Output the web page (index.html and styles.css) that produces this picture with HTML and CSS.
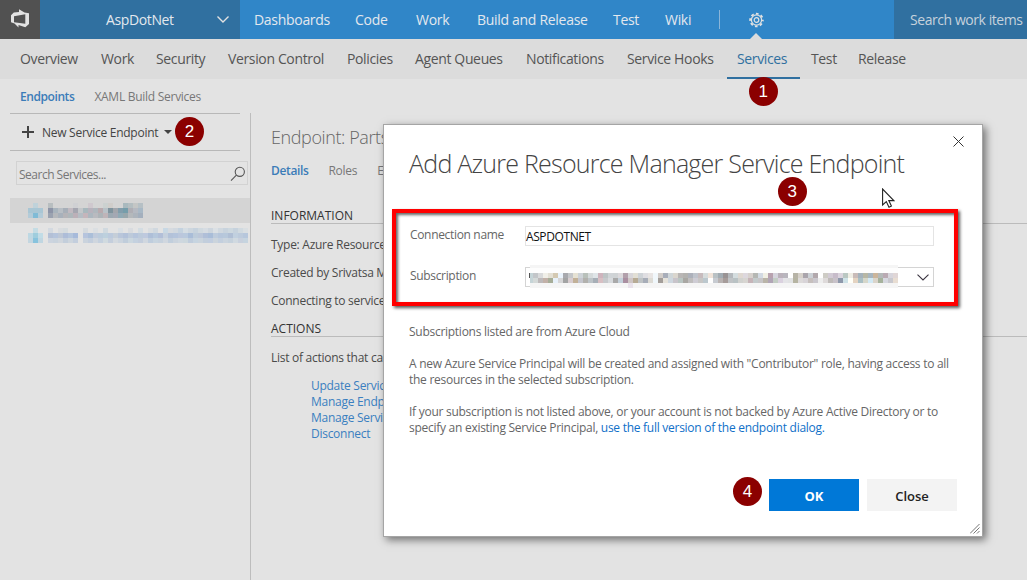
FILE: index.html
```html
<!DOCTYPE html>
<html lang="en">
<head>
<meta charset="utf-8">
<title>Services - AspDotNet</title>
<link rel="stylesheet" href="styles.css">
</head>
<body>
<div class="app">
  <header class="topbar">
    <div class="logo">
      <svg width="40" height="39" viewBox="0 0 40 39"><path fill="#e2e2e2" fill-rule="evenodd" d="M19 12V9.3L24.5 12.6L29 13.2V24L25.3 27.2L18.5 25V27.5L14.5 23.6L11 22.3V15.3L13.8 12.6ZM25.3 14.2L14 16.2V22.2L25.3 23.8Z"/></svg>
    </div>
    <div class="project">
      <span class="project-name">AspDotNet</span>
      <svg class="project-chevron" width="14" height="9" viewBox="0 0 14 9"><path d="M1.5 1.5L7 7L12.5 1.5" fill="none" stroke="#e2e2e2" stroke-width="1.4"/></svg>
    </div>
    <nav class="hubs">
      <a>Dashboards</a><a>Code</a><a>Work</a><a>Build and Release</a><a>Test</a><a>Wiki</a>
    </nav>
    <div class="settings">
      <svg width="16" height="16" viewBox="0 0 16 16" fill="none" stroke="#e2e2e2"><circle cx="7.5" cy="8" r="5.1" stroke-width="1.2"/><circle cx="7.5" cy="8" r="2.3" stroke-width="1.2"/><circle cx="7.5" cy="8" r="6.4" stroke-width="1.7" stroke-dasharray="2.7 2.327" stroke-dashoffset="1.35"/></svg>
      <i class="notch"></i>
    </div>
    <div class="search-top">Search work items</div>
  </header>
  <nav class="subnav">
    <a>Overview</a><a>Work</a><a>Security</a><a>Version Control</a><a>Policies</a><a>Agent Queues</a><a>Notifications</a><a>Service Hooks</a><a class="active">Services</a><a>Test</a><a>Release</a>
  </nav>
  <nav class="views"><a class="current">Endpoints</a><a>XAML Build Services</a></nav>
  <main class="content">
    <aside class="side">
      <div class="toolbar">
        <svg width="12" height="12" viewBox="0 0 12 12"><path d="M6 0V12M0 6H12" stroke="#444" stroke-width="2"/></svg>
        <span>New Service Endpoint</span>
        <i class="caret"></i>
      </div>
      <div class="filter">
        <span>Search Services...</span>
        <svg width="16" height="16" viewBox="0 0 16 16" fill="none" stroke="#555" stroke-width="1.1"><circle cx="9.8" cy="5.8" r="4.6"/><path d="M6.4 9.2L1 14.6"/></svg>
      </div>
      <div class="endpoint selected"><svg class="mosaic" data-name="first" width="240" height="25"></svg></div>
      <div class="endpoint"><svg class="mosaic" data-name="second" width="240" height="25"></svg></div>
    </aside>
    <section class="detail">
      <h1>Endpoint: Parts</h1>
      <div class="tabs"><a class="current">Details</a><a>Roles</a><a>E</a></div>
      <h2>INFORMATION</h2>
      <p>Type: Azure Resource</p>
      <p>Created by Srivatsa M</p>
      <p>Connecting to service</p>
      <h2 class="actions-head">ACTIONS</h2>
      <p class="actions-intro">List of actions that ca</p>
      <ul><li>Update Servic</li><li>Manage Endp</li><li>Manage Servi</li><li>Disconnect</li></ul>
    </section>
  </main>

  <div class="dialog">
    <svg class="close-x" width="11" height="11" viewBox="0 0 11 11"><path d="M.5 .5L10.5 10.5M10.5 .5L.5 10.5" stroke="#333" stroke-width="1"/></svg>
    <h3>Add Azure Resource Manager Service Endpoint</h3>
    <div class="fields">
      <label>Connection name</label><div class="input">ASPDOTNET</div>
      <label>Subscription</label>
      <div class="input combo">
        <svg class="mosaic" data-name="subscription" width="372" height="23"></svg>
        <svg class="arrow" width="12" height="7" viewBox="0 0 12 7"><path d="M.5 .7L6 6L11.5 .7" fill="none" stroke="#3a3440" stroke-width="1.1"/></svg>
      </div>
    </div>
    <div class="notes">
      <p>Subscriptions listed are from Azure Cloud</p>
      <p>A new Azure Service Principal will be created and assigned with "Contributor" role, having access to all<br>the resources in the selected subscription.</p>
      <p>If your subscription is not listed above, or your account is not backed by Azure Active Directory or to<br>specify an existing Service Principal, <a>use the full version of the endpoint dialog.</a></p>
    </div>
    <div class="buttons"><button class="primary">OK</button><button>Close</button></div>
    <svg class="grip" width="10" height="10" viewBox="0 0 10 10"><path d="M0 9.5L9.5 0M3.5 9.5L9.5 3.5M7 9.5L9.5 7" stroke="#777" stroke-width="1"/></svg>
  </div>

  <span class="badge b1">1</span><span class="badge b2">2</span><span class="badge b3">3</span><span class="badge b4">4</span>
  <svg class="pointer" width="13" height="20" viewBox="0 0 13 20"><path d="M.6 1V17L4.3 13.6L7 19.2L9.4 18L6.8 12.6H11.8Z" fill="#fff" stroke="#222" stroke-width="1.1"/></svg>
</div>
<script src="mosaic.js"></script>
</body>
</html>
```
FILE: styles.css
```css
* { box-sizing: border-box; }
body { margin: 0; font-family: "Open Sans", "Noto Sans", sans-serif; font-size: 12px; letter-spacing: -.27px; color: #4a4a4a; }
h1, h2, h3, p, ul { margin: 0; padding: 0; font-weight: 400; }
svg { display: block; flex: none; }
.app { position: relative; width: 1027px; height: 580px; overflow: hidden; background: #e3e3e3; white-space: nowrap; }

.topbar { display: flex; height: 39px; background: #3086c8; color: #e3e8ee; font-size: 14px; line-height: 40px; letter-spacing: -.38px; }
.logo { width: 40px; background: #515151; }
.project { display: flex; align-items: center; width: 200px; padding: 0 10px 0 66px; background: #3070a0; }
.project-name { flex: 1; }
.hubs { display: grid; grid-template-columns: 101px 61px 61px 136px 52px 55px; width: 479px; padding-left: 14px; height: 39px; letter-spacing: -.3px; }
.settings { position: relative; width: 175px; height: 19px; margin-top: 10px; padding: 2px 0 0 29px; border-left: 1px solid #8ab5d9; }
.notch { position: absolute; left: 30px; top: 23px; border: 6px solid transparent; border-top: 0; border-bottom-color: #dcdcdc; }
.search-top { flex: 1; padding-left: 16px; background: #3070a0; color: #c6d2dc; letter-spacing: -.44px; }

.subnav { display: grid; grid-template-columns: 81px 55px 72px 119px 68px 111px 101px 110px 74px 47px 60px; height: 40px; padding: 0 10px; background: #dcdcdc; font-size: 14px; line-height: 40px; letter-spacing: -.36px; color: #555; }
.subnav a { height: 40px; padding-left: 10px; }
.subnav .active { width: 73px; border-bottom: 2px solid #3070a0; color: #3070a0; }
.views { display: flex; gap: 20px; height: 34px; padding-left: 20px; line-height: 36px; color: #777; }
.current { font-weight: 600; letter-spacing: -.42px; color: #3b7cb8; }

.content { display: flex; height: 467px; }
.side { width: 251px; padding-left: 10px; border-right: 1px solid #bdbdbd; }
.toolbar { display: flex; align-items: center; width: 230px; height: 38px; padding-left: 12px; border: solid #b8b8b8; border-width: 1px 0; color: #444; }
.toolbar span { width: 122px; margin-left: 8px; }
.caret { margin-top: -1px; border: 4px solid transparent; border-top-color: #444; border-bottom: 0; }
.filter { display: flex; align-items: center; justify-content: space-between; width: 232px; height: 24px; margin: 10px 0 13px 6px; padding: 1px 1px 0 2px; border: 1px solid #d2d2d2; color: #777; }
.filter span { margin-top: 1px; letter-spacing: -.5px; }
.endpoint { height: 25px; overflow: hidden; }
.selected { background: #d4d4d4; }

.detail { width: 776px; padding: 11px 0 0 20px; }
.detail h1 { height: 29px; font-size: 18px; line-height: 27px; font-weight: 300; letter-spacing: -.4px; color: #666; }
.tabs { display: flex; gap: 20px; height: 35px; line-height: 36px; color: #777; }
.tabs .current { letter-spacing: -.36px; }
.detail h2 { height: 22px; margin-top: 14px; padding-top: 5px; border-bottom: 1px solid #bbb; font-size: 12px; line-height: 18px; letter-spacing: 0; color: #333; }
.detail p { height: 28px; line-height: 28px; }
.detail h2 + p { margin-top: 7px; }
.detail h2.actions-head { margin-top: 1px; height: 21px; padding-top: 4px; }
.detail ul { list-style: none; margin-top: 6px; padding-left: 40px; line-height: 16px; color: #3a7fc0; }

.dialog { position: absolute; left: 383px; top: 124px; width: 600px; height: 413px; padding: 19px 24px 0 25px; background: #fff; border: 1px solid #a5a5a5; box-shadow: 3px 3px 8px rgba(0,0,0,.5); color: #666; }
.close-x { position: absolute; left: 569px; top: 11px; }
.dialog h3 { height: 65px; font-size: 25px; line-height: 38px; font-weight: 300; letter-spacing: -.76px; color: #444; }
.fields { display: grid; grid-template-columns: 116px 1fr; grid-template-rows: 41px 41px; width: 566px; height: 97px; margin-left: -17px; padding: 13px 19px 0 13px; border: 4px solid #f00; box-shadow: 2px 2px 3px rgba(0,0,0,.65), inset 2px 2px 3px rgba(0,0,0,.6); }
.fields label { line-height: 18px; padding-left: 1px; letter-spacing: -.33px; }
.input { width: 409px; height: 20px; border: 1px solid #e4e4e4; line-height: 20px; letter-spacing: -.4px; color: #111; }
.combo { display: flex; justify-content: space-between; padding: 0 4px 0 0; border-color: #d4d4d4; }
.combo .mosaic { margin-top: -3px; }
.combo .arrow { margin-top: 6px; }
.notes { display: grid; gap: 16px; margin-top: 18px; line-height: 16px; }
.notes a { color: #0f70c8; }
.buttons { display: flex; gap: 8px; justify-content: flex-end; margin: 43px 1px 0 0; }
.buttons button { width: 90px; height: 32px; padding: 2px 0 0; border: 0; background: #f3f3f3; color: #222; font: 600 13px "Open Sans", sans-serif; }
.buttons .primary { background: #0078d7; color: #fff; font-weight: 700; }
.grip { position: absolute; right: 2px; bottom: 2px; }

.badge { position: absolute; width: 29.5px; height: 29.5px; border-radius: 50%; background: #8b0000; color: #fff; font: 17px/29px "Liberation Sans", sans-serif; letter-spacing: 0; text-align: center; }
.b1 { left: 748.6px; top: 76.8px; }
.b2 { left: 174.8px; top: 116.8px; }
.b3 { left: 777.6px; top: 176.8px; }
.b4 { left: 732.7px; top: 476.8px; }
.pointer { position: absolute; left: 882px; top: 188px; }
```
FILE: mosaic.js
```js
// Censored labels: each row is [x, y, space separated colours of 5px cells]; "-" leaves a gap.
const MOSAICS = {
  first: { rows: [
    [18, 5, "- bfd2da -"], [18, 10, "a9c6d4 a9c6d4 a9c6d4"], [18, 15, "b3cbd8 80bbd6 b3cbd8"],
    [38, 5, "b8bec0 - - - - cfd0d3 - - cfc8ce - - cbd1d0 d0cdca - - a9b9be b4bec1 c4c6c5 b6c0c5"],
    [38, 10, "8d94a7 a8b4bd b8bec4 a7afb8 c1b9c0 a5a6b0 c3c6c9 a8b8bd b8b2bc afb7bd b9aaae b8c1c7 80949e a2a6ac 829dab 759daa afaeb4 b5b9c1 a8b8c5"],
    [38, 15, "9aa2b0 b5b8bc a8b1bb b5b4b8 aeb7bb bcb0b8 b5bdc4 c5b5bb acb7bf b9babf adb4b8 bfb4b8 9ca9b2 a4a8b3 90aab5 98a7ac b4b8bb adb4bc a3afbd"]
  ]},
  second: { rows: [
    [18, 5, "- c4dce4 -"], [18, 10, "bdd8e3 9fcddd c1dce6"], [18, 15, "c3d6e0 88c3dd c0d6e1"],
    [38, 5, "d3d9e0 - d9dcdf d5dbde - - - d5dade - dbdfe2 - d0d9df - - d9dfe4 - d8dbdf - d3dce2 - d9dde0 d0d8df - c8d8e4 d6dadf d1d8df c4d2df d5dde3 cdd6de c6d2dd d0d9df d6dce2 cdd5dd dbe0e4 d0d8df c8d3dd cdd8df c6d2dd d1dae0 dadfe2"],
    [38, 10, "b3c0d6 b5c4dc bdc7d6 aebdd8 b4c5dc a7bada - b6c4dd abbfd9 c0cbdc bbccdc bdd0dd bccadd c5ced8 b9c6da b2c1d9 bdcada b6c5dc bccadb bec9de aebfd8 b5c7dc b2bfd8 c5d0dd b3c2d9 b4c4dc bbc7dc b9c9dd a9bdd8 bccbda bcc7d9 b0bfd8 a9bdd8 bdcbdc b6c6db b7c8db b0bfd5 c1d0df bdcbdc b7c7dc"],
    [38, 15, "ccd4df c9d3dd d0d6dd c3cedb cdd5dd c3cedd - cad3dd c3cedd cfd6de c4d0de d0dadf c4cedc d3d9df cbd4de c0cddb cbd7df c4d1df c3cddc d0d7df bfcddd c7d4df c6d1dd d0d7df c1cedc cad3dd ced7df ccd7dd bfccdc c6d4e0 cad4dd c2cedc c1cddf cbd4dc c3cfde cad4de c5d1dc d0d9e0 c8d0dd c6d4df"]
  ]},
  subscription: { rows: [
    [7, 8, "c3c6c9 d9dadb f0efe8 e4e0d5 d4c9b2 eaf3fc a8a9ae c5c7ca e6e2d4 ced3d8 b8c0ba d5dadb dfe5e8 ceb4bd bdc4c5 d0d4d7 cfd3d5 dcd9dc b2a0ab d8d6da e2dfd5 ced3d7 dfdee2 e8e4e3 f1f7fb d2cdc9 a8aeba cfd6d9 dad6ce b9b6b5 b3b2af adb1bb bfc4cc c7bbbd d6dcdc f0e3d9 b9c1c4 a2acb3 999394 b5b9bd d4dddf dfd8d1 ddd8de d7d1cd b5b7b3 d2d9e2 f0efe4 b8a2af d5d4dd bbb2bb b9b6be fefefe b7b3a6 d6d1ca aaa5ac cbd0d5 b2a8ac fefefe ceccc5 d2cbd5 c7bcca dbd4de bac7c2 efede4 c9bbb8 a4b2bc b7b7a5 a7b6c0 cbb59b b4b9b9 baaab3 d7d5dc e0d6d6"],
    [7, 13, "d4d9d8 bdb9ba c2b1a8 a6ad98 e8f1fa d7d7d8 a3a4a4 d8cdd0 c2b198 c5c6ce b2b1ad bdc4c8 a7afb7 d8bfc3 c7c9cc d7dadd a9a9a9 c4d0da aa8fa1 cfc6c5 b7ab95 bfc3c5 a7adb8 dddbd5 f0f7fb a39e9a e6e3db ced7df c8c4ca b9c5c2 a9a7a3 bfbdbd ceccd4 c7c6c5 bcc8ce fefefe c7cbd1 b9b3b2 a69c9a c0c3c6 b9c2c4 d1d2cf d7d5d1 c6b4b8 c3cacb c7c5c7 b9b4a8 b1a5b6 c3cdc4 dad1df e4e4e7 e2e3e4 b6b4a2 dddada d8d4d8 c6bfbd cac7cd eeeeee dedada bfbbb9 c8c2c9 8e98ab cfe2e7 fffff8 e4d3c1 aabfc4 d6d7ca d2e9f4 dad4ca a6b29c d6d8e0 c8c8ce e8ddd2"]
  ]}
};
const NS = "http://www.w3.org/2000/svg";
function cell(svg, x, y, w, h, fill) {
  const r = document.createElementNS(NS, "rect");
  for (const [k, v] of Object.entries({ x, y, width: w, height: h, fill })) r.setAttribute(k, v);
  svg.append(r);
}
document.querySelectorAll(".mosaic").forEach(svg => {
  const name = svg.dataset.name;
  if (name === "subscription") {
    cell(svg, 4, 0, 368, 23, "#f5f5f5");
    cell(svg, 4, 3, 368, 15, "#fdfdfd");
    cell(svg, 3, 8, 1, 5, "#555");
    cell(svg, 4, 8, 3, 10, "#c5d4d7");
    cell(svg, 367, 8, 5, 10, "#f3f9fd");
    cell(svg, 102, 18, 5, 5, "#e9e2eb");
  }
  for (const [x, y, colours] of MOSAICS[name].rows)
    colours.split(" ").forEach((c, i) => { if (c !== "-") cell(svg, x + i * 5, y, 5, 5, "#" + c); });
});
```
